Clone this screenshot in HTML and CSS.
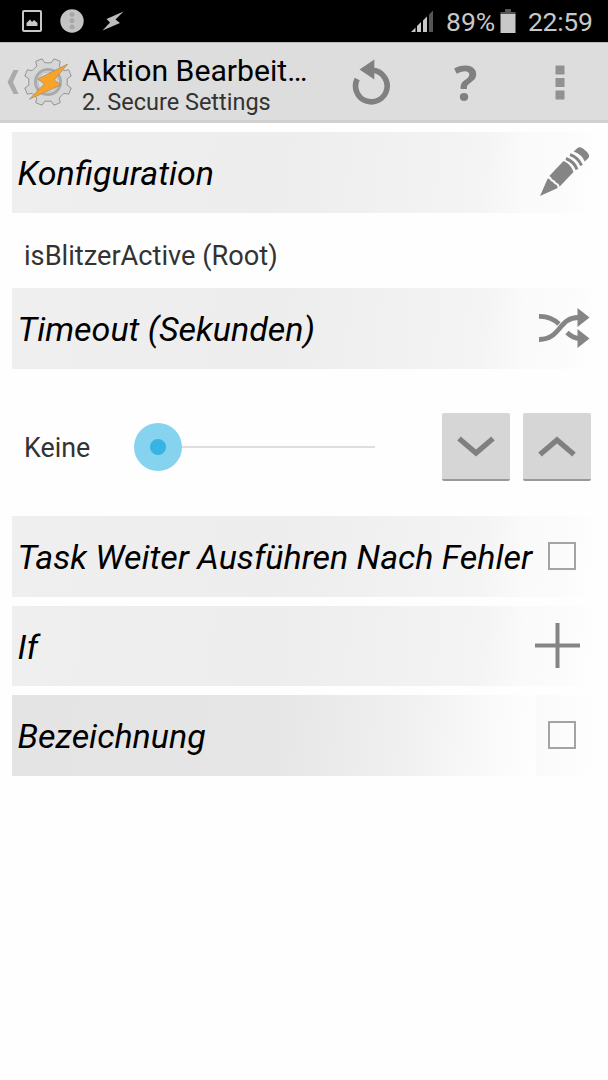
FILE: index.html
```html
<!DOCTYPE html>
<html lang="de">
<head>
  <meta charset="UTF-8" />
  <meta name="viewport" content="width=device-width, initial-scale=1.0" />
  <title>Aktion Bearbeiten</title>
  <link rel="stylesheet" href="styles.css">
</head>
<body>
  <div class="status-bar">
    <div class="status-left">
      <svg width="20" height="22" viewBox="0 0 20 22">
        <rect x="1" y="1" width="18" height="20" rx="1" fill="none" stroke="#c8c8c8" stroke-width="2" />
        <path d="M4.500 16V13L8 9.500L10 12L12 10L15.500 13V16Z" fill="#c8c8c8" />
      </svg>
      <svg width="24" height="24" viewBox="0 0 24 24">
        <circle cx="12" cy="12" r="11.700" fill="#c4c4c4" />
        <g fill="#aaa" stroke="#999" stroke-width="0.600">
          <circle cx="12" cy="5.500" r="2" />
          <circle cx="12" cy="11.700" r="2" />
          <circle cx="12" cy="17.900" r="2" />
        </g>
      </svg>
      <svg width="22" height="20" viewBox="0 0 22 20">
        <path d="M21.500 0.500L4.500 8L8 11.500L0.500 19.500L18 12L13.500 8.500Z" fill="#bdbdbd" />
      </svg>
    </div>
    <div class="status-right">
      <svg class="signal" width="23" height="22" viewBox="0 0 23 22">
        <path d="M0 22L4.500 17.500V22ZM6 22V16L10 12V22ZM12 22V10.500L16 6.500V22Z" fill="#c8c8c8" />
        <path d="M18 22V4.500L22 0.500V22Z" fill="#555" />
      </svg>
      <span class="percent">89%</span>
      <svg class="battery" width="16" height="24" viewBox="0 0 16 24">
        <path d="M5 0H11V3H15.500V6H0.500V3H5Z" fill="#555" />
        <rect x="0.500" y="5" width="15" height="19" fill="#c8c8c8" />
      </svg>
      <span class="clock">22:59</span>
    </div>
  </div>

  <div class="action-bar">
    <svg class="back" width="12" height="26" viewBox="0 0 12 26">
      <path d="M6.500 1H11.500L6 13L11.500 25H6.500L0.500 13Z" fill="#aaa" />
    </svg>
    <svg class="logo" width="50" height="50" viewBox="-25 -25 50 50">
      <path d="M3.200 -19.200L6 -23.200L12.200 -20.700L11.300 -15.900L15.900 -11.300L20.700 -12.200L23.200 -6L19.200 -3.200V3.200L23.200 6L20.700 12.200L15.900 11.300L11.300 15.900L12.200 20.700L6 23.200L3.200 19.200H-3.200L-6 23.200L-12.200 20.700L-11.300 15.900L-15.900 11.300L-20.700 12.200L-23.200 6L-19.200 3.200V-3.200L-23.200 -6L-20.700 -12.200L-15.900 -11.300L-11.300 -15.900L-12.200 -20.700L-6 -23.200L-3.200 -19.200Z" fill="#d6d6d6" stroke="#8c8c8c" stroke-width="0.900" stroke-linejoin="round" />
      <circle r="12.500" fill="#ddd" stroke="#aaa" stroke-width="3" />
      <circle r="10" fill="none" stroke="#bbb" stroke-width="1" />
      <path d="M19.700 -18L-10.300 -3L-3.700 2L-18.700 17.300L12.700 3L6.300 -2Z" fill="#faa329" stroke="#8a8378" stroke-width="0.600" />
    </svg>
    <div class="titles">
      <div class="title">Aktion Bearbeit…</div>
      <div class="subtitle">2. Secure Settings</div>
    </div>
    <div class="actions">
      <svg width="40" height="46" viewBox="0 0 40 46">
        <path d="M21 11.300A15.800 15.800 0 1 1 5.200 20" fill="none" stroke="#808080" stroke-width="5.600" />
        <path d="M22.300 0.500V20.500L7.500 10.500Z" fill="#808080" />
      </svg>
      <span class="help">?</span>
      <svg width="10" height="35" viewBox="0 0 10 35">
        <path d="M0.500 0.500H9.500V9.500H0.500ZM0.500 13H9.500V22H0.500ZM0.500 25.500H9.500V34.500H0.500Z" fill="#929292" />
      </svg>
    </div>
  </div>

  <div class="content">
    <div class="section">
      <h2>Konfiguration</h2>
      <svg class="pencil" width="50" height="50" viewBox="0 0 50 50">
        <g fill="#858585">
          <path d="M0 49L7.700 31.500Q10 31.500 11 34Q13 34.500 14.500 37Q17.500 37.500 17.700 41Z" />
          <path d="M9.300 29L23.500 14Q31 17 33.500 25L19.500 39.700Q19.300 36.500 16 35.500Q14.500 32.500 12 32.200Q11.300 29.800 9.300 29Z" />
          <path d="M33.700 4.500L37.500 1Q39.500 -0.500 43 1.500Q47 4.300 49 8Q49.500 10 48 11.500L44.700 14.500Q42 7.500 33.700 4.500Z" />
        </g>
        <path d="M26 11.500Q34 14.500 37 22.500M30 7.700Q38 10.500 41.500 18.500" fill="none" stroke="#858585" stroke-width="3" />
      </svg>
    </div>
    <div class="value">isBlitzerActive (Root)</div>

    <div class="section">
      <h2>Timeout (Sekunden)</h2>
      <svg class="shuffle" width="51" height="40" viewBox="0 0 51 40">
        <path d="M0 31.500C21 32 20 9.500 39 9.500M0 8.500Q11 8 20 16M28 24.500Q33.500 30 40 30.500" fill="none" stroke="#858585" stroke-width="4.800" />
        <path d="M38.500 0L50.500 9.500L38.500 19ZM38.500 21L50.500 30.500L38.500 40Z" fill="#858585" />
      </svg>
    </div>
    <div class="slider-row">
      <span class="slider-label">Keine</span>
      <div class="slider">
        <div class="thumb"></div>
      </div>
      <div class="step-btn">
        <svg width="38" height="22" viewBox="0 0 38 22">
          <path d="M2 3.500L19 18L36 3.500" fill="none" stroke="#808080" stroke-width="5.400" />
        </svg>
      </div>
      <div class="step-btn">
        <svg width="38" height="22" viewBox="0 0 38 22">
          <path d="M2 19.500L19 5L36 19.500" fill="none" stroke="#808080" stroke-width="5.400" />
        </svg>
      </div>
    </div>

    <div class="section">
      <h2>Task Weiter Ausführen Nach Fehler</h2>
      <div class="checkbox"></div>
    </div>
    <div class="section">
      <h2>If</h2>
      <svg class="plus" width="45" height="45" viewBox="0 0 45 45">
        <path d="M22.500 0V45M0 22.500H45" stroke="#858585" stroke-width="4" />
      </svg>
    </div>
    <div class="section dark">
      <h2>Bezeichnung</h2>
      <div class="checkbox"></div>
    </div>
  </div>
</body>
</html>
```
FILE: styles.css
```css
* {
  box-sizing: border-box;
}
body {
  margin: 0;
  background: #fefefe;
  font-family: Roboto, sans-serif;
  color: #333;
}
svg {
  display: block;
  flex: none;
}
.status-bar {
  height: 42px;
  padding: 0 15px 0 22px;
  background: #000;
  color: #c8c8c8;
  font-size: 26.5px;
  display: flex;
  justify-content: space-between;
}
.status-left,
.status-right {
  display: flex;
  align-items: center;
}
.status-left {
  gap: 18px;
}
.status-right span {
  line-height: 42px;
  padding-top: 1px;
  white-space: nowrap;
}
.signal {
  margin-right: 12px;
}
.percent {
  width: 50px;
}
.battery {
  margin: 0 12px 0 4px;
}
.clock {
  width: 65px;
  letter-spacing: -0.3px;
}
.action-bar {
  height: 81px;
  padding: 1px 0 0 7px;
  background: #ddd;
  border-top: 1px solid #bbb;
  border-bottom: 3px solid #d0d0d0;
  display: flex;
  align-items: center;
}
.logo {
  margin: 0 9px 0 4px;
}
.titles {
  width: 270px;
  padding-top: 6px;
  white-space: nowrap;
}
.title {
  color: #000;
  font-size: 30.2px;
  line-height: 34px;
}
.subtitle {
  font-size: 23.5px;
  line-height: 29px;
}
.actions {
  display: flex;
  align-items: center;
}
.help {
  width: 24px;
  margin: 0 77px 0 62px;
  font: bold 49px/60px "Open Sans", sans-serif;
  color: #808080;
}
.content {
  padding: 9px 12px 0;
}
.section {
  height: 80.5px;
  margin-bottom: 9px;
  padding: 0 4px 0 5.5px;
  background: linear-gradient(95deg, #efefef 0%, #ededed 45%, #f4f4f4 80%, #fafafa 87%, #fbfbfb 94%, #fefefe 99%);
  display: flex;
  align-items: center;
  justify-content: space-between;
}
.section.dark {
  background:
    linear-gradient(90deg, #fafafa, #fefefe) right / 60px 100% no-repeat,
    linear-gradient(95deg, #e4e4e4 0%, #e6e6e6 45%, #f0f0f0 67%, #fafafa 82%, #fefefe 90%);
}
h2 {
  margin: 0;
  padding-top: 2px;
  color: #000;
  font-size: 34px;
  font-weight: 400;
  font-style: italic;
  line-height: 40px;
  white-space: nowrap;
}
.value {
  height: 66.5px;
  padding: 18px 12px 0;
  font-size: 27.2px;
  line-height: 32px;
}
.checkbox {
  width: 28px;
  height: 28px;
  margin-right: 16px;
  border: 2px solid #a4a4a4;
  flex: none;
}
.pencil {
  margin-right: 2px;
}
.shuffle {
  margin-right: 2px;
}
.plus {
  margin-right: 12px;
}
.slider-row {
  height: 138.5px;
  padding-left: 12px;
  display: flex;
  align-items: center;
}
.slider-label {
  width: 110px;
  padding-top: 2px;
  font-size: 26.8px;
  flex: none;
}
.slider {
  width: 241px;
  height: 48px;
  margin-right: 67px;
  background: linear-gradient(#dedede, #dedede) center / 100% 2px no-repeat;
  flex: none;
}
.thumb {
  width: 48px;
  height: 48px;
  border-radius: 50%;
  background: radial-gradient(circle, #38b4e4 7.5px, #86d3ef 8.5px);
}
.step-btn {
  width: 68px;
  height: 68px;
  margin-right: 13px;
  background: #d6d6d6;
  border-bottom: 2px solid #999;
  border-radius: 2px;
  display: flex;
  align-items: center;
  justify-content: center;
  flex: none;
}
.step-btn:last-child {
  margin-right: 0;
}
```
